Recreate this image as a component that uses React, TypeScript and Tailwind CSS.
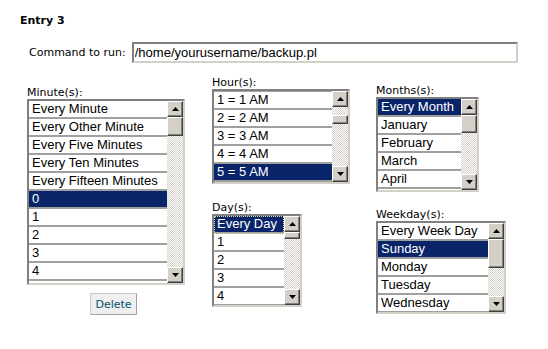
import clsx from 'clsx';

type BoxProps = {
  box: string;
  items: string[];
  sel: number;
  focus?: boolean;
  topLine?: boolean;
  thumb: string;
};

function Arrow({ up }: { up?: boolean }) {
  return (
    <svg width="7" height="4" viewBox="0 0 7 4">
      <polygon points={up ? '0,4 7,4 3.5,0' : '0,0 7,0 3.5,4'} fill="#000" />
    </svg>
  );
}

function ScrollBtn({ up }: { up?: boolean }) {
  return (
    <div className="flex h-4 w-4 items-center justify-center border border-t-white border-l-white border-r-[#404040] border-b-[#404040] bg-[#d4d0c8] shadow-[inset_-1px_-1px_#808080]">
      <Arrow up={up} />
    </div>
  );
}

function ScrollBar({ thumb }: { thumb: string }) {
  return (
    <div className="flex w-4 shrink-0 flex-col">
      <ScrollBtn up />
      <div className="flex-1 bg-[repeating-conic-gradient(#d4d0c8_0%_25%,#ffffff_0%_50%)] bg-size-[2px_2px]">
        <div className={clsx(thumb, 'w-4 border border-t-white border-l-white border-r-[#404040] border-b-[#404040] bg-[#d4d0c8] shadow-[inset_-1px_-1px_#808080]')} />
      </div>
      <ScrollBtn />
    </div>
  );
}

function Row({ text, on, focus }: { text: string; on?: boolean; focus?: boolean }) {
  return (
    <div
      className={clsx(
        'h-[18px] border-b-2 border-[#a0a0a0] pl-[3px] font-["Liberation_Sans",Arial,sans-serif] text-[13px] leading-[16px] whitespace-nowrap',
        on ? 'bg-[#0a246a] text-white' : 'bg-white text-black',
        focus && 'outline-1 outline-dotted outline-[#e0e0a0] -outline-offset-1',
      )}
    >
      {text}
    </div>
  );
}

function ListBox({ box, items, sel, focus, topLine, thumb }: BoxProps) {
  return (
    <div className={clsx(box, 'flex border-2 border-t-[#808080] border-l-[#808080] border-r-[#d4d0c8] border-b-[#d4d0c8] bg-white')}>
      <div className={clsx('min-w-0 flex-1 overflow-hidden', topLine && 'border-t border-[#a0a0a0]')}>
        {items.map((t, i) => (
          <Row key={t} text={t} on={i === sel} focus={focus && i === sel} />
        ))}
      </div>
      <ScrollBar thumb={thumb} />
    </div>
  );
}

export default function App() {
  return (
    <div className="h-[349px] w-[548px] bg-white font-['DejaVu_Sans',Verdana,sans-serif] text-[11px] leading-[13px] text-black">
      <div className="pl-5 pt-[14px]">
        <div className="font-bold">Entry 3</div>

        <div className="mt-[15px] flex items-center pl-[9px]">
          <span>Command to run:</span>
          <input
            className="ml-[6px] h-[21px] w-[386px] border-2 border-t-[#808080] border-l-[#808080] border-r-[#d4d0c8] border-b-[#d4d0c8] pl-[1px] font-['Liberation_Sans',Arial,sans-serif] text-[13px] text-black outline-none"
            defaultValue="/home/yourusername/backup.pl"
          />
        </div>

        <div className="mt-[13px] flex items-start">
          <div className="ml-[7px] mt-[10px] flex w-[158px] flex-col">
            <div>Minute(s):</div>
            <ListBox
              box="h-[186px] w-[158px]"
              items={[
                'Every Minute',
                'Every Other Minute',
                'Every Five Minutes',
                'Every Ten Minutes',
                'Every Fifteen Minutes',
                '0',
                '1',
                '2',
                '3',
                '4',
              ]}
              sel={5}
              thumb="h-[19px]"
            />
            <button className="ml-[63px] mt-[8px] h-[22px] w-[47px] border border-[#c8c8c8] border-r-[#a0a0a0] border-b-[#a0a0a0] bg-[#efefef] text-[11px] text-[#00506e]">
              Delete
            </button>
          </div>

          <div className="ml-[27px] flex flex-col">
            <div>Hour(s):</div>
            <ListBox
              box="h-[95px] w-[138px]"
              topLine
              items={['1 = 1 AM', '2 = 2 AM', '3 = 3 AM', '4 = 4 AM', '5 = 5 AM']}
              sel={4}
              thumb="mt-[8px] h-[9px]"
            />
            <div className="mt-[17px]">Day(s):</div>
            <ListBox
              box="h-[93px] w-[90px]"
              items={['Every Day', '1', '2', '3', '4']}
              sel={0}
              focus
              thumb="h-[7px]"
            />
          </div>

          <div className="ml-[26px] mt-[8px] flex flex-col">
            <div>Months(s):</div>
            <ListBox
              box="h-[95px] w-[103px]"
              items={['Every Month', 'January', 'February', 'March', 'April']}
              sel={0}
              thumb="h-[18px]"
            />
            <div className="mt-[16px]">Weekday(s):</div>
            <ListBox
              box="h-[93px] w-[130px]"
              items={['Every Week Day', 'Sunday', 'Monday', 'Tuesday', 'Wednesday']}
              sel={1}
              thumb="h-[29px]"
            />
          </div>
        </div>
      </div>
    </div>
  );
}
